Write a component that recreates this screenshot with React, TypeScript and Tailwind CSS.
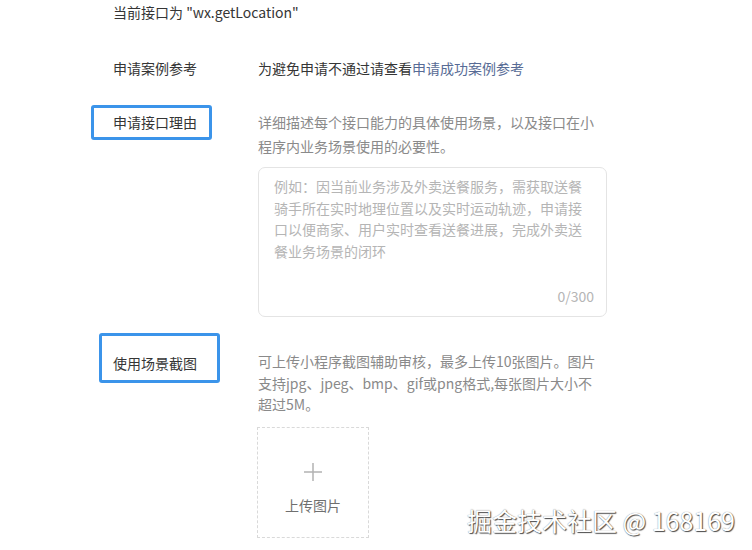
import React from "react";

const font = { fontFamily: '"Noto Sans CJK SC", "Noto Sans", sans-serif' };

function Highlight({ className }: { className: string }) {
  return (
    <span
      className={`pointer-events-none absolute rounded-[3px] border-[3px] border-[#3b94ea] ${className}`}
    />
  );
}

export default function App() {
  return (
    <div
      className="relative h-[550px] w-[752px] overflow-hidden bg-white text-[14px] text-[#353535]"
      style={font}
    >
      <div className="pl-[113px]">
        <p className="pt-[2px] leading-[20px]">当前接口为 "wx.getLocation"</p>

        {/* 申请案例参考 */}
        <div className="mt-[36px] flex leading-[20px]">
          <div className="w-[145px] shrink-0">申请案例参考</div>
          <div>
            为避免申请不通过请查看
            <span className="text-[#576b95]">申请成功案例参考</span>
          </div>
        </div>

        {/* 申请接口理由 */}
        <div className="mt-[32px] flex">
          <div className="relative w-[145px] shrink-0 pt-[1px] leading-[22px]">
            申请接口理由
            <Highlight className="-left-[22px] -top-[5px] h-[35px] w-[121px]" />
          </div>
          <div className="w-[350px]">
            <p className="leading-[24px] text-[#8a8a8a]">
              详细描述每个接口能力的具体使用场景，以及接口在小
              <br />
              程序内业务场景使用的必要性。
            </p>
            <div className="relative mt-[9px] h-[150px] w-[349px] rounded-[7px] border border-[#e4e4e4] px-[15px] pt-[8px]">
              <p className="leading-[21.7px] text-[#b5b5b5]">
                例如：因当前业务涉及外卖送餐服务，需获取送餐骑手所在实时地理位置以及实时运动轨迹，申请接口以便商家、用户实时查看送餐进展，完成外卖送餐业务场景的闭环
              </p>
              <span className="absolute bottom-[10px] right-[12px] leading-[20px] text-[#b5b5b5]">
                0/300
              </span>
            </div>
          </div>
        </div>

        {/* 使用场景截图 */}
        <div className="mt-[34px] flex">
          <div className="relative w-[145px] shrink-0 pt-[1px] leading-[22px]">
            使用场景截图
            <Highlight className="-left-[14px] -top-[18px] h-[50px] w-[121px]" />
          </div>
          <div className="w-[352px]">
            <p className="leading-[21.5px] text-[#8a8a8a]">
              可上传小程序截图辅助审核，最多上传10张图片。图片
              <br />
              支持jpg、jpeg、bmp、gif或png格式,每张图片大小不
              <br />
              超过5M。
            </p>
            <div className="-ml-[1px] mt-[11px] flex h-[111px] w-[112px] flex-col items-center border border-dashed border-[#d9d9d9]">
              <svg
                width="18"
                height="18"
                viewBox="0 0 18 18"
                className="mt-[35px]"
                stroke="#b3b3b3"
                strokeWidth="1.5"
              >
                <path d="M9 0v18M0 9h18" />
              </svg>
              <span className="mt-[14px] leading-[20px] text-[#6f6f6f]">
                上传图片
              </span>
            </div>
          </div>
        </div>
      </div>

      <div
        className="absolute bottom-[14px] right-[17px] text-[25px] leading-[32px] text-white"
        style={{ textShadow: "1px 1px 1px #4a4a4a, 0 0 1px #777" }}
      >
        掘金技术社区 @ 168169
      </div>
    </div>
  );
}
